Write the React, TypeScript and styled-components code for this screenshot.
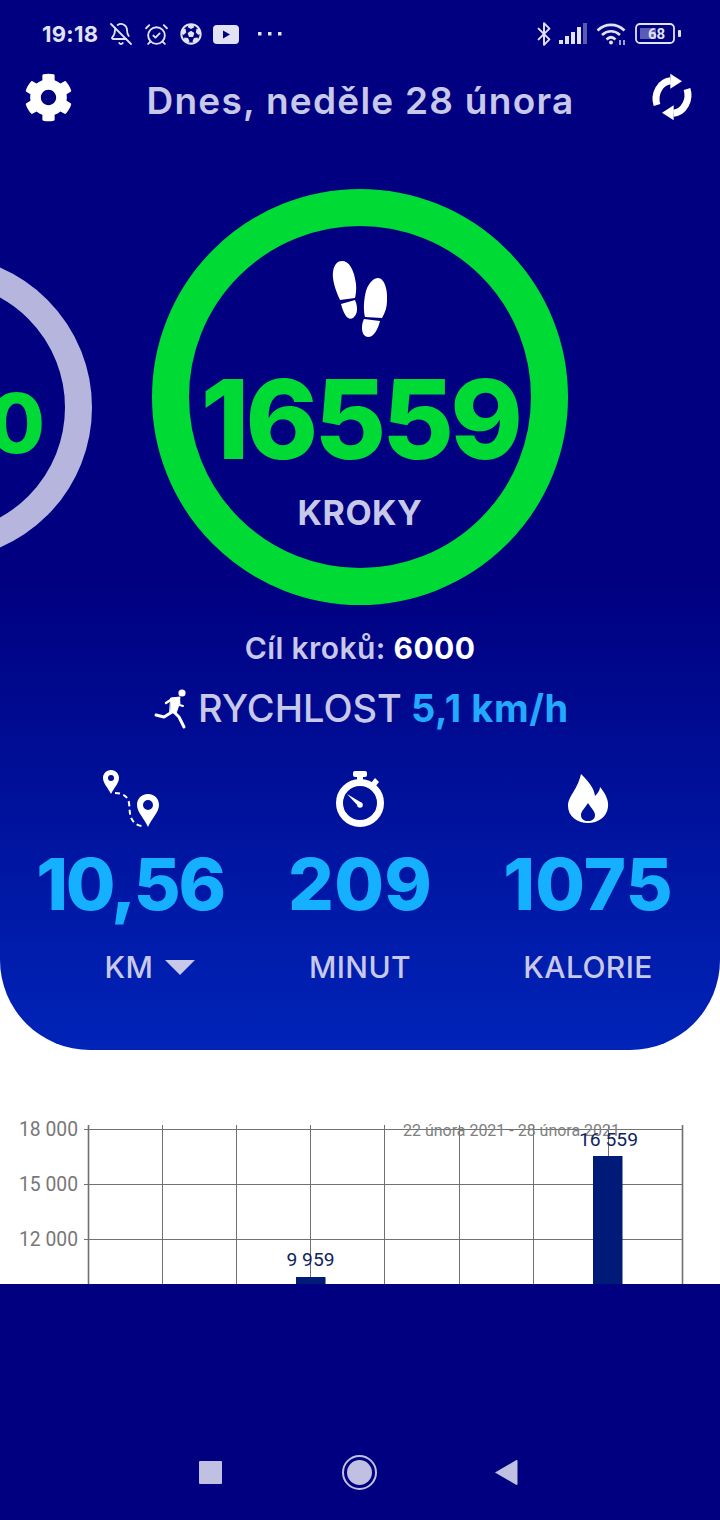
import React from "react";
import styled, { createGlobalStyle } from "styled-components";
import { AlarmClockCheck, BellOff, Bluetooth } from "lucide-react";
import { FaCog, FaFutbol } from "react-icons/fa";

const GlobalStyle = createGlobalStyle`
  html, body {
    margin: 0;
    padding: 0;
    background: #000080;
  }
  body {
    font-family: Inter, "Liberation Sans", sans-serif;
  }
`;

const Page = styled.div`
  width: 720px;
  height: 1520px;
  display: flex;
  flex-direction: column;
  overflow: hidden;
  background: #000080;
`;

const HeroBackdrop = styled.div`
  height: 1050px;
  flex-shrink: 0;
  background: #fff;
`;

const Hero = styled.section`
  height: 1050px;
  overflow: hidden;
  border-radius: 0 0 90px 90px;
  background: linear-gradient(180deg, #000080 0%, #000080 55%, #0024b8 100%);
`;

const ChartArea = styled.section`
  height: 234px;
  flex-shrink: 0;
  overflow: hidden;
  background: #fff;
`;

const StatusBar = styled.div`
  height: 68px;
  display: flex;
  align-items: center;
  justify-content: space-between;
  padding: 0 38px 0 42px;
  color: #e2e2f5;
`;

const StatusGroup = styled.div<{ $gap: number }>`
  display: flex;
  align-items: center;
  gap: ${({ $gap }) => $gap}px;
`;

const Time = styled.span`
  font-size: 22px;
  font-weight: 700;
  letter-spacing: 0.3px;
`;

const BluetoothMark = styled(Bluetooth)`
  margin-right: -6px;
`;

const Dots = styled.svg`
  width: 26px;
  height: 6px;
  margin-left: 7px;
  fill: #e2e2f5;
`;

const Header = styled.header`
  height: 64px;
  display: flex;
  align-items: center;
  justify-content: space-between;
  padding: 0 24px;
  color: #fff;
`;

const HeaderIcon = styled.span`
  display: flex;
  margin-bottom: 6px;
`;

const Title = styled.h1`
  margin: 0;
  font-size: 37px;
  font-weight: 600;
  letter-spacing: 1.25px;
  color: #c8c8e8;
  white-space: nowrap;
`;

const Stage = styled.div`
  display: flex;
  align-items: flex-start;
  margin-top: 57px;
  height: 416px;
`;

const PrevRing = styled.div`
  width: 305px;
  height: 305px;
  box-sizing: border-box;
  flex-shrink: 0;
  margin: 66px 60px 0 -213px;
  border: 27px solid #b5b5de;
  border-radius: 50%;
  display: flex;
  align-items: center;
  justify-content: flex-end;
  padding: 32px 20px 0 0;
`;

const PrevValue = styled.span`
  font-size: 82px;
  font-weight: 800;
  color: #00da35;
`;

const Ring = styled.div`
  width: 416px;
  height: 416px;
  box-sizing: border-box;
  flex-shrink: 0;
  border: 37px solid #00da35;
  border-radius: 50%;
  display: flex;
  flex-direction: column;
  align-items: center;
`;

const StepsIcon = styled.svg`
  width: 60px;
  height: 80px;
  margin-top: 33px;
  fill: #fff;
`;

const StepsValue = styled.div`
  font-size: 110px;
  line-height: 110px;
  font-weight: 800;
  letter-spacing: -3.8px;
  color: #00da35;
  margin-top: 25px;
`;

const StepsLabel = styled.div`
  font-size: 34px;
  line-height: 40px;
  font-weight: 700;
  letter-spacing: 0.5px;
  color: #c8c8e8;
  margin-top: 19px;
`;

const Goal = styled.div`
  margin-top: 24px;
  height: 38px;
  line-height: 38px;
  text-align: center;
  font-size: 30px;
  font-weight: 600;
  letter-spacing: 0.4px;
  color: #c8c8e8;

  strong {
    color: #fff;
    font-weight: 700;
  }
`;

const Speed = styled.div`
  margin-top: 18px;
  height: 46px;
  display: flex;
  align-items: center;
  justify-content: center;
  font-size: 38px;
  font-weight: 500;
  color: #c8c8e8;
`;

const SpeedLabel = styled.span`
  margin-left: 3px;
`;

const SpeedValue = styled.span`
  color: #22aaff;
  font-weight: 700;
  font-size: 38px;
  letter-spacing: 0.6px;
  margin-left: 9px;
`;

const Stats = styled.div`
  display: grid;
  grid-template-columns: 260px 200px 256px;
  margin-top: 37px;
`;

const Stat = styled.div`
  display: flex;
  flex-direction: column;
  align-items: center;
`;

const StatIcon = styled.svg`
  width: 60px;
  height: 64px;
  fill: #fff;
`;

const StatValue = styled.div<{ $tight?: boolean }>`
  font-size: 72px;
  line-height: 84px;
  font-weight: 800;
  letter-spacing: ${({ $tight }) => ($tight ? "-2.3px" : "0.2px")};
  color: #15b0ff;
  margin-top: 10px;
  white-space: nowrap;
`;

const StatLabel = styled.div<{ $shift?: number }>`
  display: flex;
  align-items: center;
  gap: 12px;
  font-size: 30px;
  line-height: 36px;
  font-weight: 500;
  letter-spacing: 0.4px;
  color: #c8c8e8;
  margin: 23px 0 0 ${({ $shift }) => $shift ?? 0}px;
`;

const Caret = styled.span`
  width: 0;
  height: 0;
  border-left: 15px solid transparent;
  border-right: 15px solid transparent;
  border-top: 15px solid #c8c8e8;
`;

const ChartText = styled.text<{ $color: string; $size: number }>`
  font-family: Roboto, "Liberation Sans", sans-serif;
  font-size: ${({ $size }) => $size}px;
  fill: ${({ $color }) => $color};
`;

const NavBar = styled.nav`
  flex: 1;
  display: flex;
  align-items: center;
  justify-content: center;
  gap: 119px;
  padding: 140px 4px 0 0;
  box-sizing: border-box;
  background: #000080;
`;

const NavSquare = styled.span`
  width: 23px;
  height: 23px;
  margin: 0 -1px 0 1px;
  border-radius: 1px;
  background: #c0c0e2;
`;

const NavCircle = styled.span`
  width: 35px;
  height: 35px;
  box-sizing: border-box;
  margin: 0 -2px 0 2px;
  border-radius: 50%;
  border: 2.5px solid #c0c0e2;
  padding: 3px;
  display: flex;

  &::after {
    content: "";
    flex: 1;
    border-radius: 50%;
    background: #c0c0e2;
  }
`;

const NavBack = styled.svg`
  width: 24px;
  height: 27px;
  fill: #c0c0e2;
`;

const gridX = [88, 162, 236, 310, 384, 459, 533, 608, 682];

const yTicks = [
  { label: "18 000", y: 79 },
  { label: "15 000", y: 134 },
  { label: "12 000", y: 189 },
];

const bars = [
  { label: "9 959", x: 296, top: 227, labelX: 286.5, labelY: 216, width: 48 },
  { label: "16 559", x: 593, top: 106, labelX: 579, labelY: 96, width: 59 },
];

const SignalIcon = () => (
  <svg width="29" height="22" viewBox="0 0 29 22" fill="#e2e2f5">
    <rect x="0" y="17" width="4" height="4" />
    <rect x="6" y="13" width="4" height="8" />
    <rect x="12" y="9" width="4" height="12" />
    <rect x="18" y="4" width="4" height="17" />
    <rect x="24" y="0" width="4" height="21" opacity="0.4" />
  </svg>
);

const WifiIcon = () => (
  <svg width="31" height="24" viewBox="0 0 31 24" fill="none" stroke="#e2e2f5" strokeWidth="2.6">
    <path d="M1.5 8.5C9.5 1 20.5 1 28.5 8.5" />
    <path d="M6 13C11.5 8 18.5 8 24 13" />
    <path d="M10.5 17.5C13.5 14.5 16.5 14.5 19.5 17.5" />
    <circle cx="15" cy="20.5" r="2" fill="#e2e2f5" stroke="none" />
    <path d="M24 23V18M28 23V18" strokeWidth="1.4" />
  </svg>
);

const BatteryIcon = () => (
  <svg width="47" height="22" viewBox="0 0 47 22">
    <rect x="1" y="1" width="38" height="19" rx="4" fill="none" stroke="#e2e2f5" strokeWidth="1.8" />
    <rect x="5" y="5" width="16" height="11" fill="#5a5ab8" />
    <rect x="43" y="7" width="3" height="7" rx="1" fill="#e2e2f5" />
    <ChartText x="13" y="16" $size={15} $color="#e2e2f5" fontWeight="700">
      68
    </ChartText>
  </svg>
);

const YoutubeIcon = () => (
  <svg width="26" height="19" viewBox="0 0 26 19">
    <rect width="26" height="19" rx="4" fill="#e2e2f5" />
    <path d="M10 5.5L17 9.5L10 13.5Z" fill="#000080" />
  </svg>
);

const SyncIcon = () => (
  <svg width="48" height="48" viewBox="0 0 48 48" fill="#fff">
    <path d="M9 32C5.5 21 12 9 22.5 7.8" fill="none" stroke="#fff" strokeWidth="7" />
    <path d="M22.3 0.7L34 8.3L22.3 15.7Z" />
    <path d="M39 16C42.5 27 36 39 25.5 40.2" fill="none" stroke="#fff" strokeWidth="7" />
    <path d="M25.7 32.3L14 39.7L25.7 47.3Z" />
  </svg>
);

const RunnerIcon = () => (
  <svg width="44" height="48" viewBox="0 0 44 48" fill="none" stroke="#fff" strokeLinecap="round" strokeLinejoin="round">
    <circle cx="31" cy="9" r="3.6" fill="#fff" stroke="none" />
    <path d="M20 14L29 13L27.5 22L25 29.5L19 28Z" fill="#fff" strokeWidth="1" />
    <path d="M21 15L15 19" strokeWidth="2.4" />
    <path d="M28 14L28.5 21L32 22" strokeWidth="2" />
    <path d="M21 28L13 33L5 31" strokeWidth="3" />
    <path d="M23 28L28 33L33 43" strokeWidth="3" />
  </svg>
);

export default function App() {
  return (
    <Page>
      <GlobalStyle />
      <HeroBackdrop>
        <Hero>
          <StatusBar>
            <StatusGroup $gap={11}>
              <Time>19:18</Time>
              <BellOff size={24} strokeWidth={1.8} />
              <AlarmClockCheck size={25} strokeWidth={1.8} />
              <FaFutbol size={22} />
              <YoutubeIcon />
              <Dots viewBox="0 0 26 6">
                <rect x="1" y="1" width="3.5" height="3.5" />
                <rect x="11" y="1" width="3.5" height="3.5" />
                <rect x="21" y="1" width="3.5" height="3.5" />
              </Dots>
            </StatusGroup>
            <StatusGroup $gap={8}>
              <BluetoothMark size={26} strokeWidth={1.8} />
              <SignalIcon />
              <WifiIcon />
              <BatteryIcon />
            </StatusGroup>
          </StatusBar>

          <Header>
            <HeaderIcon>
              <FaCog size={49} />
            </HeaderIcon>
            <Title>Dnes, neděle 28 února</Title>
            <HeaderIcon>
              <SyncIcon />
            </HeaderIcon>
          </Header>

          <Stage>
            <PrevRing>
              <PrevValue>0</PrevValue>
            </PrevRing>
            <Ring>
              <StepsIcon viewBox="30 18 60 80">
                <path d="M40 59C35 48 32 38 33 31C34 23 38 20 42 20C49 20 54 28 56 43C56.5 48 56 53 55 57Z" />
                <path d="M41 63L55 59C58 66 58 73 53 77C48 80 44 74 41 63Z" />
                <path d="M65 76C63 68 64 58 66 50C69 41 74 37 78 37C84 37 88 48 87 60C87 66 85 72 82 77Z" />
                <path d="M64 78L80 80C78 88 74 96 68 96C62 96 60 86 64 78Z" />
              </StepsIcon>
              <StepsValue>16559</StepsValue>
              <StepsLabel>KROKY</StepsLabel>
            </Ring>
          </Stage>

          <Goal>
            Cíl kroků: <strong>6000</strong>
          </Goal>

          <Speed>
            <RunnerIcon />
            <SpeedLabel>RYCHLOST</SpeedLabel>
            <SpeedValue>5,1 km/h</SpeedValue>
          </Speed>

          <Stats>
            <Stat>
              <StatIcon viewBox="20 8 60 64">
                <path
                  fillRule="evenodd"
                  d="M31 10C26 10 23 14 23 18C23 23 28 28 31 34C34 28 39 23 39 18C39 14 36 10 31 10ZM31 15A3 3 0 1 1 31 21A3 3 0 1 1 31 15Z"
                />
                <path
                  fillRule="evenodd"
                  d="M68 34C61 34 57 39 57 45C57 52 64 58 68 67C72 58 79 52 79 45C79 39 75 34 68 34ZM68 40A5 5 0 1 1 68 50A5 5 0 1 1 68 40Z"
                />
                <path
                  d="M35 33C42 33 48 36 49 43C50 50 49 56 53 61C55 64 59 66 63 66"
                  fill="none"
                  stroke="#fff"
                  strokeWidth="2"
                  strokeDasharray="5 3.5"
                />
              </StatIcon>
              <StatValue $tight>10,56</StatValue>
              <StatLabel $shift={40}>
                KM <Caret />
              </StatLabel>
            </Stat>
            <Stat>
              <StatIcon viewBox="10 8 60 64">
                <circle cx="40" cy="43" r="20.5" fill="none" stroke="#fff" strokeWidth="7" />
                <rect x="33" y="11" width="14" height="6" rx="2" />
                <rect x="37" y="15" width="6" height="8" />
                <path d="M51 23L55 18L59 22L55 27Z" />
                <path d="M27 34L42 43L39 47Z" />
                <circle cx="40" cy="45" r="2.8" />
              </StatIcon>
              <StatValue>209</StatValue>
              <StatLabel>MINUT</StatLabel>
            </Stat>
            <Stat>
              <StatIcon viewBox="239 8 60 64">
                <path
                  fillRule="evenodd"
                  d="M262 14C268 20 275 27 276 36C279 33 281 30 281 27C286 33 290 40 289 47C288 57 279 63 269 63C258 63 249 56 249 46C249 36 258 31 262 14ZM269 43C272 48 276 51 276 55C276 59 273 61 269 61C265 61 262 59 262 55C262 51 266 48 269 43Z"
                />
              </StatIcon>
              <StatValue>1075</StatValue>
              <StatLabel>KALORIE</StatLabel>
            </Stat>
          </Stats>
        </Hero>
      </HeroBackdrop>

      <ChartArea>
        <svg width="720" height="234" viewBox="0 0 720 234">
          {gridX.map((x, i) => (
            <line
              key={x}
              x1={x + 0.5}
              x2={x + 0.5}
              y1={75}
              y2={234}
              stroke="#707070"
              strokeWidth={i === 0 || i === gridX.length - 1 ? 1.6 : 1}
            />
          ))}
          {yTicks.map((t) => (
            <line key={t.y} x1={84} x2={682} y1={t.y + 0.5} y2={t.y + 0.5} stroke="#707070" strokeWidth={1} />
          ))}
          {yTicks.map((t) => (
            <ChartText
              key={t.label}
              x={19}
              y={t.y + 7}
              $size={20}
              $color="#777"
              textLength={59}
              lengthAdjust="spacingAndGlyphs"
            >
              {t.label}
            </ChartText>
          ))}
          {bars.map((b) => (
            <rect key={b.x} x={b.x} y={b.top} width={29.5} height={234 - b.top} fill="#001a78" />
          ))}
          <ChartText
            x={403}
            y={86}
            $size={16}
            $color="#808080"
            textLength={217}
            lengthAdjust="spacingAndGlyphs"
          >
            22 února 2021 - 28 února 2021
          </ChartText>
          {bars.map((b) => (
            <ChartText
              key={b.label}
              x={b.labelX}
              y={b.labelY}
              $size={19}
              $color="#0e2460"
              textLength={b.width}
              lengthAdjust="spacingAndGlyphs"
            >
              {b.label}
            </ChartText>
          ))}
        </svg>
      </ChartArea>

      <NavBar>
        <NavSquare />
        <NavCircle />
        <NavBack viewBox="0 0 24 27">
          <path d="M1 13.5L22 1.2C23 0.8 23.5 1.2 23.5 2V25C23.5 25.8 23 26.2 22 25.8Z" />
        </NavBack>
      </NavBar>
    </Page>
  );
}
